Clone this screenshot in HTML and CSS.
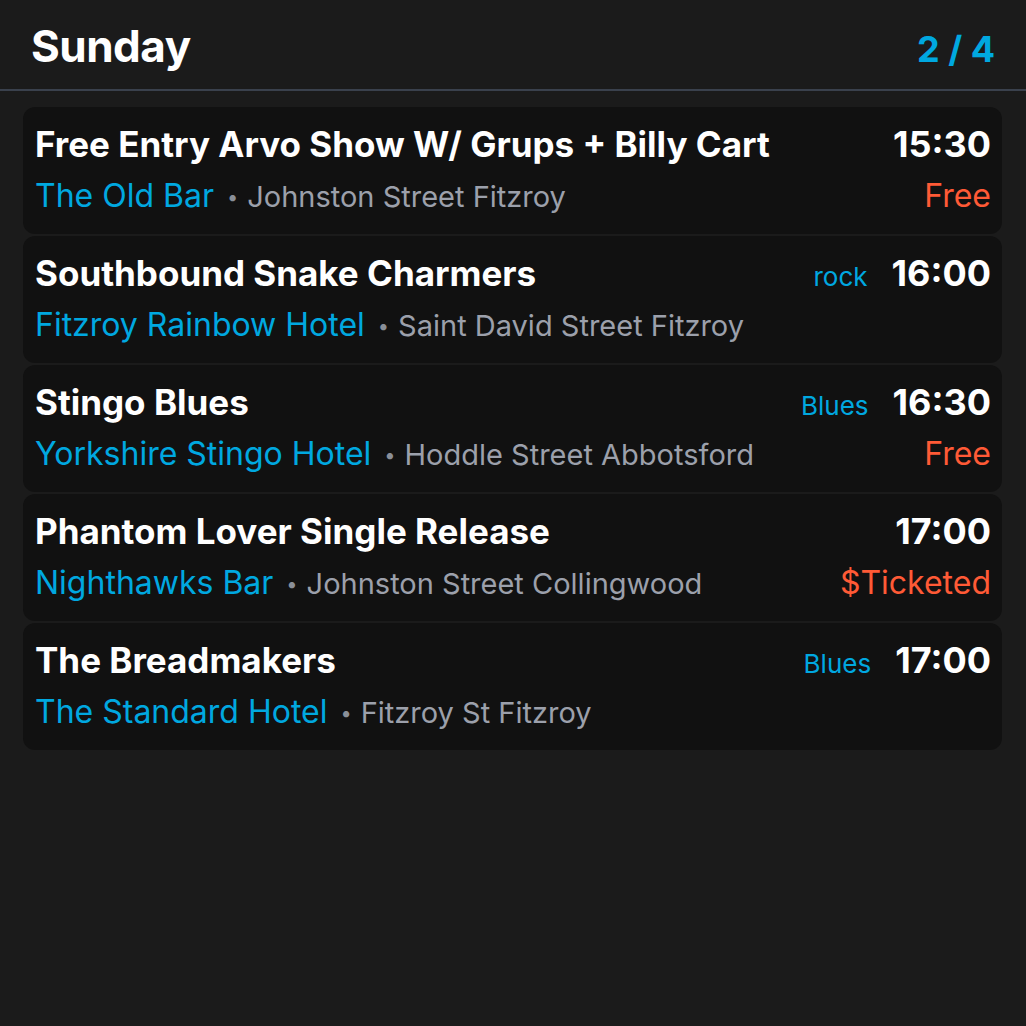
FILE: index.html
```html
<!DOCTYPE html>
<html>
<head>
<meta charset="utf-8">
<link rel="stylesheet" href="styles.css">
</head>
<body>
<div class="page">
  <header class="header">
    <h1 class="day">Sunday</h1>
    <div class="pager">2 / 4</div>
  </header>
  <div class="list">
    <div class="card">
      <div class="row">
        <div class="title">Free Entry Arvo Show W/ Grups + Billy Cart</div>
        <div class="meta"><span class="time">15:30</span></div>
      </div>
      <div class="row">
        <div class="place"><span class="venue">The Old Bar</span><span class="dot">•</span><span class="addr">Johnston Street Fitzroy</span></div>
        <div class="price">Free</div>
      </div>
    </div>
    <div class="card">
      <div class="row">
        <div class="title">Southbound Snake Charmers</div>
        <div class="meta"><span class="tag">rock</span><span class="time">16:00</span></div>
      </div>
      <div class="row">
        <div class="place"><span class="venue">Fitzroy Rainbow Hotel</span><span class="dot">•</span><span class="addr">Saint David Street Fitzroy</span></div>
      </div>
    </div>
    <div class="card">
      <div class="row">
        <div class="title">Stingo Blues</div>
        <div class="meta"><span class="tag">Blues</span><span class="time">16:30</span></div>
      </div>
      <div class="row">
        <div class="place"><span class="venue">Yorkshire Stingo Hotel</span><span class="dot">•</span><span class="addr">Hoddle Street Abbotsford</span></div>
        <div class="price">Free</div>
      </div>
    </div>
    <div class="card">
      <div class="row">
        <div class="title">Phantom Lover Single Release</div>
        <div class="meta"><span class="time">17:00</span></div>
      </div>
      <div class="row">
        <div class="place"><span class="venue">Nighthawks Bar</span><span class="dot">•</span><span class="addr">Johnston Street Collingwood</span></div>
        <div class="price">$Ticketed</div>
      </div>
    </div>
    <div class="card">
      <div class="row">
        <div class="title">The Breadmakers</div>
        <div class="meta"><span class="tag">Blues</span><span class="time">17:00</span></div>
      </div>
      <div class="row">
        <div class="place"><span class="venue">The Standard Hotel</span><span class="dot">•</span><span class="addr">Fitzroy St Fitzroy</span></div>
      </div>
    </div>
  </div>
</div>
</body>
</html>
```
FILE: styles.css
```css
html, body {
  margin: 0;
  padding: 0;
  background: #1b1b1b;
}
body {
  font-family: Inter, "Noto Sans", sans-serif;
  color: #ffffff;
  width: 1026px;
  height: 1026px;
  overflow: hidden;
}
.header {
  display: flex;
  justify-content: space-between;
  align-items: baseline;
  height: 91px;
  box-sizing: border-box;
  padding: 18px 31px 0 31px;
  border-bottom: 2px solid #3a414d;
}
.day {
  margin: 0;
  font-size: 44px;
  font-weight: 700;
  line-height: 56px;
  letter-spacing: -0.5px;
}
.pager {
  font-size: 36px;
  font-weight: 700;
  color: #00a8e0;
}
.list {
  display: flex;
  flex-direction: column;
  gap: 2px;
  padding: 16px 24px 0 23px;
}
.card {
  background: #111111;
  border-radius: 12px;
  height: 127px;
  box-sizing: border-box;
  padding: 14px 11px 0 12px;
}
.row {
  display: flex;
  justify-content: space-between;
  align-items: baseline;
  height: 52px;
}
.title {
  font-size: 35px;
  font-weight: 700;
  line-height: 46px;
}
.meta {
  display: flex;
  align-items: baseline;
  gap: 24px;
}
.tag {
  font-size: 26px;
  color: #00a8e0;
}
.time {
  font-size: 36px;
  font-weight: 700;
}
.place {
  font-size: 32px;
  line-height: 46px;
  white-space: nowrap;
}
.venue {
  color: #00a8e0;
}
.dot {
  color: #8a8f98;
  font-size: 20px;
  margin: 0 9px 0 13px;
  vertical-align: 3px;
}
.addr {
  color: #9ca0ab;
  font-size: 29px;
}
.price {
  font-size: 32px;
  color: #ff5a36;
}
```
